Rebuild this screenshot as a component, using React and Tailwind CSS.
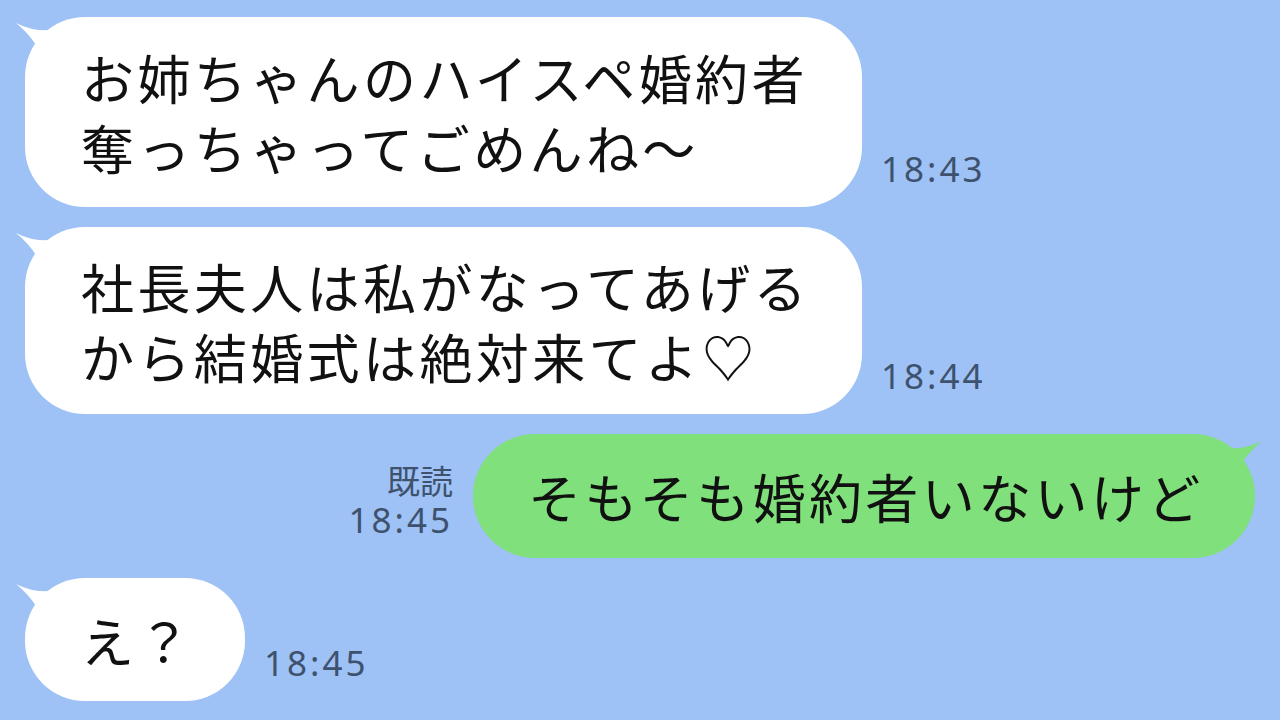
import React from 'react';

const jp = { fontFamily: '"Noto Sans CJK JP", "Noto Sans", sans-serif' };

const TailLeft = ({ color }) => (
  <svg className="absolute left-[-12px] top-[1px]" width="50" height="50" viewBox="0 0 50 50">
    <path d="M3,5 Q20,14 42,12 L32,46 Q24,22 3,5 Z" fill={color} />
  </svg>
);

const TailRight = ({ color }) => (
  <svg className="absolute right-[-10px] top-[2px]" width="50" height="50" viewBox="0 0 50 50">
    <path d="M47,5 Q30,14 8,12 L18,46 Q26,22 47,5 Z" fill={color} />
  </svg>
);

const Time = ({ children }) => (
  <div className="text-[35px] leading-[40px] tracking-[3px] text-[#3e526e] whitespace-nowrap" style={{ fontFamily: '"Noto Sans", sans-serif' }}>
    {children}
  </div>
);

const LeftMessage = ({ lines, time, width, height }) => (
  <div className="flex items-end pl-[25px]">
    <div
      className={`relative bg-white rounded-[60px] flex flex-col justify-center pl-[56px] ${width} ${height}`}
    >
      <TailLeft color="#ffffff" />
      {lines.map((l, i) => (
        <div key={i} className="relative text-[53px] leading-[70px] tracking-[3.4px] text-[#111] whitespace-nowrap" style={jp}>
          {l}
        </div>
      ))}
    </div>
    <div className="ml-[19px] mb-[18px]">
      <Time>{time}</Time>
    </div>
  </div>
);

export default function App() {
  return (
    <div className="w-[1280px] h-[720px] bg-[#9ec1f6] overflow-hidden flex flex-col gap-[20px] pt-[17px]">
      <LeftMessage
        lines={['お姉ちゃんのハイスペ婚約者', '奪っちゃってごめんね～']}
        time="18:43"
        width="w-[837px]"
        height="h-[190px]"
      />
      <LeftMessage
        lines={['社長夫人は私がなってあげる', 'から結婚式は絶対来てよ♡']}
        time="18:44"
        width="w-[837px]"
        height="h-[187px]"
      />
      <div className="flex items-end justify-end pr-[25px]">
        <div className="flex flex-col items-end mr-[20px] mb-[18px]">
          <div className="text-[33px] leading-[40px] text-[#3e526e] whitespace-nowrap" style={jp}>既読</div>
          <Time>18:45</Time>
        </div>
        <div className="relative bg-[#80e07b] rounded-[62px] w-[782px] h-[124px] flex items-center pl-[55px]">
          <TailRight color="#80e07b" />
          <span className="relative text-[53px] leading-[70px] tracking-[3.4px] text-[#111] whitespace-nowrap" style={jp}>
            そもそも婚約者いないけど
          </span>
        </div>
      </div>
      <LeftMessage lines={['え？']} time="18:45" width="w-[220px]" height="h-[123px]" />
    </div>
  );
}
